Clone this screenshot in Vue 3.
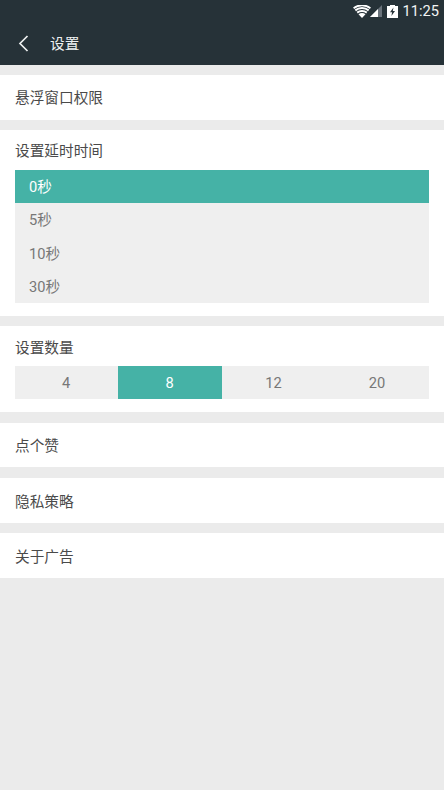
<script setup>
const delays = ['0秒', '5秒', '10秒', '30秒']
const counts = ['4', '8', '12', '20']
const links = ['点个赞', '隐私策略', '关于广告']
</script>

<template>
  <div class="page">
    <header class="header">
      <div class="status">
        <svg class="wifi" width="18" height="13" viewBox="0 0 18 13">
          <path d="M9 13 5.500 9.200C7.500 7.700 10.500 7.700 12.500 9.200Z" fill="#fff"/>
          <path d="M4.200 7.600C6.900 5.500 11.100 5.500 13.800 7.600" fill="none" stroke="#fff" stroke-width="2"/>
          <path d="M2.300 5.400C6.200 2.300 11.800 2.300 15.700 5.400" fill="none" stroke="#fff" stroke-width="2"/>
          <path d="M.6 3.200C5.500-.7 12.500-.7 17.400 3.200" fill="none" stroke="#fff" stroke-width="1.800"/>
        </svg>
        <svg class="signal" width="12" height="12" viewBox="0 0 12 12"><path d="M12 0V12H0Z" fill="#69727a"/><path d="M8 4V12H0Z" fill="#fff"/></svg>
        <svg class="battery" width="11" height="13" viewBox="0 0 11 13"><path d="M3 0H8V1H11V13H0V1H3Z" fill="#fff"/><path d="M6.500 2.500 3 7.300H5.100L4.400 11 8 6H5.800Z" fill="#263238"/></svg>
        <span class="time">11:25</span>
      </div>
      <div class="toolbar">
        <svg class="back" width="11" height="17" viewBox="0 0 11 17"><path d="M9.500 1 2 8.500 9.500 16" fill="none" stroke="#eef1f1" stroke-width="1.700"/></svg>
        <span class="title">设置</span>
      </div>
    </header>

    <section class="row row-top">悬浮窗口权限</section>

    <section class="card">
      <div class="label label-high">设置延时时间</div>
      <div class="list">
        <div v-for="(d, i) in delays" :key="d" class="list-item" :class="{ active: i === 0 }">{{ d }}</div>
      </div>
    </section>

    <section class="card">
      <div class="label label-low">设置数量</div>
      <div class="segments">
        <div v-for="(c, i) in counts" :key="c" class="segment" :class="{ active: i === 1 }">{{ c }}</div>
      </div>
    </section>

    <section v-for="l in links" :key="l" class="row">{{ l }}</section>
  </div>
</template>

<style scoped>
.page {
  width: 444px;
  height: 790px;
  overflow: hidden;
  background: #ebebeb;
  font-family: Roboto, "Noto Sans CJK SC", sans-serif;
  font-size: 14.67px;
  color: #4a4a4a;
  display: flex;
  flex-direction: column;
  gap: 10.670px;
}
.header {
  height: 65px;
  background: #263238;
  margin-bottom: -0.670px;
  flex: none;
}
.status {
  height: 22px;
  display: flex;
  align-items: center;
  justify-content: flex-end;
  padding-right: 5px;
}
.signal {
  margin: 0 5px 0 0;
}
.wifi {
  margin-right: -1px;
}
.battery {
  margin-right: 5px;
}
.time {
  color: #f2f4f4;
  font-size: 14.67px;
}
.toolbar {
  height: 41px;
  display: flex;
  align-items: center;
  padding-left: 18px;
}
.back {
  margin-top: 1px;
}
.title {
  color: #eef1f1;
  margin-left: 21px;
}
.row {
  height: 44.670px;
  flex: none;
  box-sizing: border-box;
  background: #fff;
  padding-left: 15px;
  display: flex;
  align-items: center;
}
.row-top {
  padding-bottom: 1.500px;
}
.card {
  background: #fff;
  padding: 0 15px 13px;
  flex: none;
}
.label {
  height: 39.500px;
  box-sizing: border-box;
  display: flex;
  align-items: center;
}
.label-high {
  padding-bottom: 1px;
}
.label-low {
  padding-top: 1px;
}
.list {
  background: #efefef;
}
.list-item {
  height: 33.250px;
  box-sizing: border-box;
  padding: 0 0 1.500px 14px;
  display: flex;
  align-items: center;
  color: #777;
}
.segments {
  display: grid;
  grid-template-columns: 103px 104px 104px 103px;
  background: #efefef;
}
.segment {
  height: 33px;
  box-sizing: border-box;
  padding: 1px 1px 0 0;
  display: flex;
  align-items: center;
  justify-content: center;
  color: #777;
}
.list-item.active,
.segment.active {
  background: #45b2a6;
  color: #fff;
}
</style>

<style>
html, body { margin: 0; background: #ebebeb; }
</style>
